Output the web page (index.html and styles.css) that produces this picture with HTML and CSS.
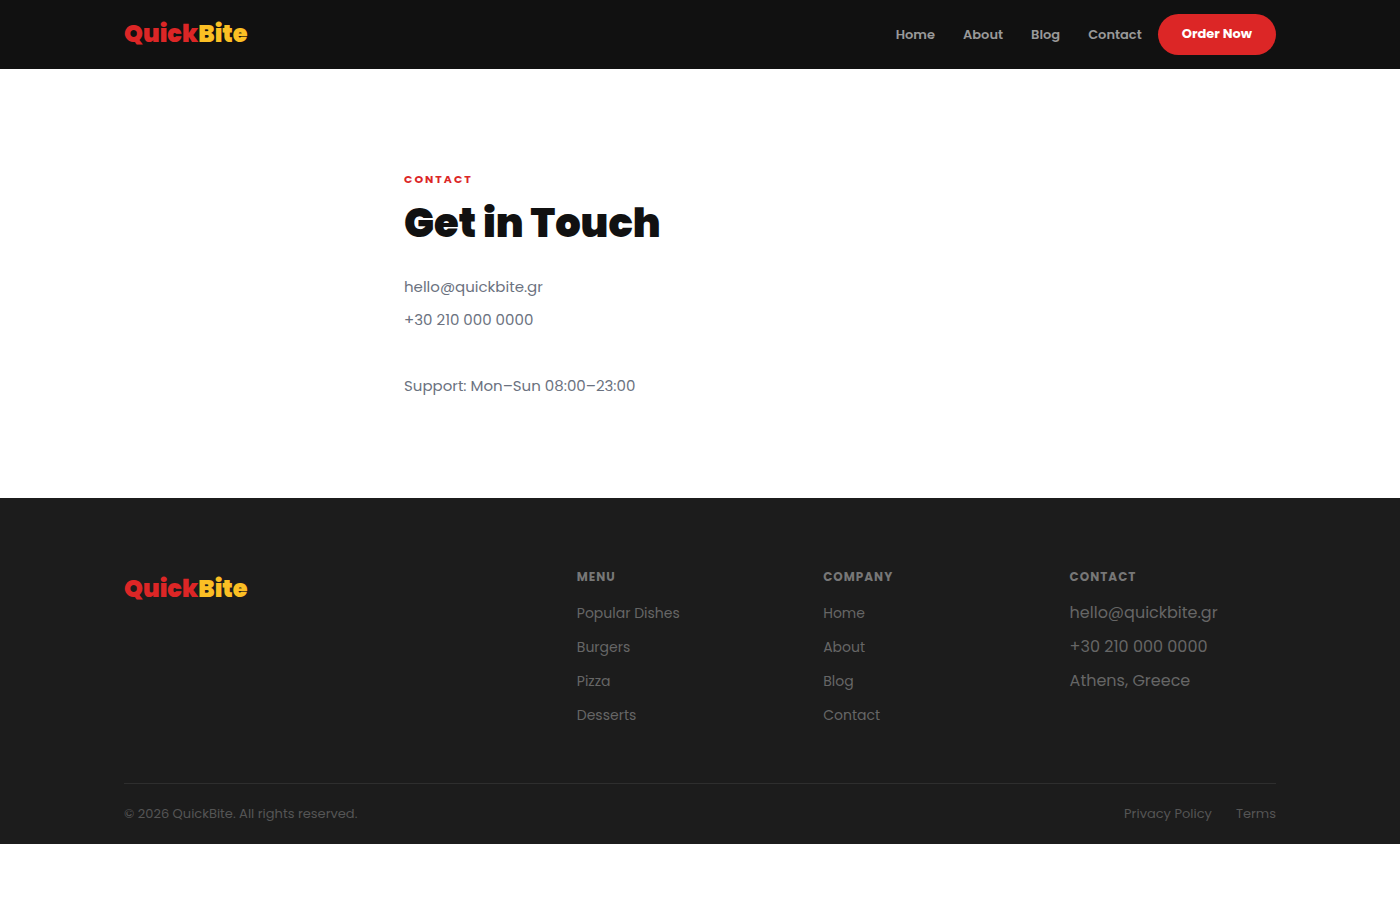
FILE: index.html
```
<!DOCTYPE html>
<html lang="en">
<head>
    <meta charset="UTF-8">
    <meta name="viewport" content="width=device-width, initial-scale=1.0">
    <title>Contact - QuickBite</title>
    <link rel="stylesheet" href="styles.css">
</head>
<body>
    <header class="site-header">
        <div class="container header-inner">
            <a href="#" class="logo">Quick<span>Bite</span></a>
            <div class="header-right">
                <nav class="main-nav">
                    <a href="#">Home</a>
                    <a href="#">About</a>
                    <a href="#">Blog</a>
                    <a href="#">Contact</a>
                </nav>
                <button type="button" class="btn-order">Order Now</button>
            </div>
        </div>
    </header>

    <main class="contact">
        <div class="label">Contact</div>
        <h1>Get in Touch</h1>
        <p>
            hello@quickbite.gr<br>
            +30 210 000 0000<br>
            <br>
            Support: Mon–Sun 08:00–23:00
        </p>
    </main>

    <footer class="site-footer">
        <div class="container">
            <div class="footer-grid">
                <div class="footer-brand">
                    <a href="#" class="logo">Quick<span>Bite</span></a>
                </div>
                <div>
                    <h4>Menu</h4>
                    <ul>
                        <li><a href="#">Popular Dishes</a></li>
                        <li><a href="#">Burgers</a></li>
                        <li><a href="#">Pizza</a></li>
                        <li><a href="#">Desserts</a></li>
                    </ul>
                </div>
                <div>
                    <h4>Company</h4>
                    <ul>
                        <li><a href="#">Home</a></li>
                        <li><a href="#">About</a></li>
                        <li><a href="#">Blog</a></li>
                        <li><a href="#">Contact</a></li>
                    </ul>
                </div>
                <div>
                    <h4>Contact</h4>
                    <ul>
                        <li>hello@quickbite.gr</li>
                        <li>+30 210 000 0000</li>
                        <li>Athens, Greece</li>
                    </ul>
                </div>
            </div>
            <div class="footer-bottom">
                <span>© 2026 QuickBite. All rights reserved.</span>
                <div class="footer-legal">
                    <a href="#">Privacy Policy</a>
                    <a href="#">Terms</a>
                </div>
            </div>
        </div>
    </footer>
</body>
</html>
```
FILE: styles.css
```
* {
    margin: 0;
    padding: 0;
    box-sizing: border-box;
}
body {
    font-family: "Poppins", "Inter", sans-serif;
    font-size: 16px;
    color: #111111;
    background: #ffffff;
}
a {
    color: inherit;
    text-decoration: none;
}
ul {
    list-style: none;
}
.container {
    max-width: 1200px;
    margin: 0 auto;
    padding: 0 24px;
}
.logo {
    font-size: 24px;
    font-weight: 900;
    line-height: 40px;
    color: #dc2626;
}
.logo span { color: #fbbf24; }

/* Header */
.site-header {
    background: #111111;
    padding: 14px 0;
}
.header-inner {
    display: flex;
    align-items: flex-start;
    justify-content: space-between;
}
.header-right {
    display: flex;
    align-items: center;
    gap: 16px;
}
.main-nav {
    display: flex;
    gap: 28px;
    font-size: 13px;
    font-weight: 600;
    line-height: 21px;
    color: #999999;
}
.btn-order {
    padding: 10px 24px 11px;
    border: none;
    border-radius: 50px;
    background: #dc2626;
    color: #ffffff;
    font-family: inherit;
    font-size: 13px;
    font-weight: 700;
    line-height: 20px;
    cursor: pointer;
}

/* Contact */
.contact {
    max-width: 640px;
    margin: 0 auto;
    padding: 96px 24px;
}
.label {
    font-size: 11px;
    font-weight: 700;
    line-height: 28px;
    letter-spacing: 2px;
    text-transform: uppercase;
    color: #dc2626;
}
.contact h1 {
    margin: 8px 0 25px;
    font-size: 40px;
    font-weight: 900;
    line-height: 44px;
}
.contact p {
    font-size: 15px;
    line-height: 33px;
    color: #6b7280;
}

/* Footer */
.site-footer {
    padding-top: 64px;
    background: #1c1c1c;
    color: #666666;
}
.footer-grid {
    display: grid;
    grid-template-columns: 2fr 1fr 1fr 1fr;
    gap: 40px;
    padding-bottom: 55px;
}
.footer-brand { padding-top: 7px; }
.site-footer h4 {
    margin-bottom: 8px;
    font-size: 12px;
    font-weight: 700;
    line-height: 30px;
    letter-spacing: 1px;
    text-transform: uppercase;
    color: #777777;
}
.site-footer ul {
    display: grid;
    gap: 8px;
    line-height: 26px;
}
.site-footer li a { font-size: 14px; }
.footer-bottom {
    display: flex;
    justify-content: space-between;
    padding: 20px 0;
    border-top: 1px solid #2e2e2e;
    font-size: 13px;
    line-height: 20px;
    color: #555555;
}
.footer-legal {
    display: flex;
    gap: 24px;
}
```
